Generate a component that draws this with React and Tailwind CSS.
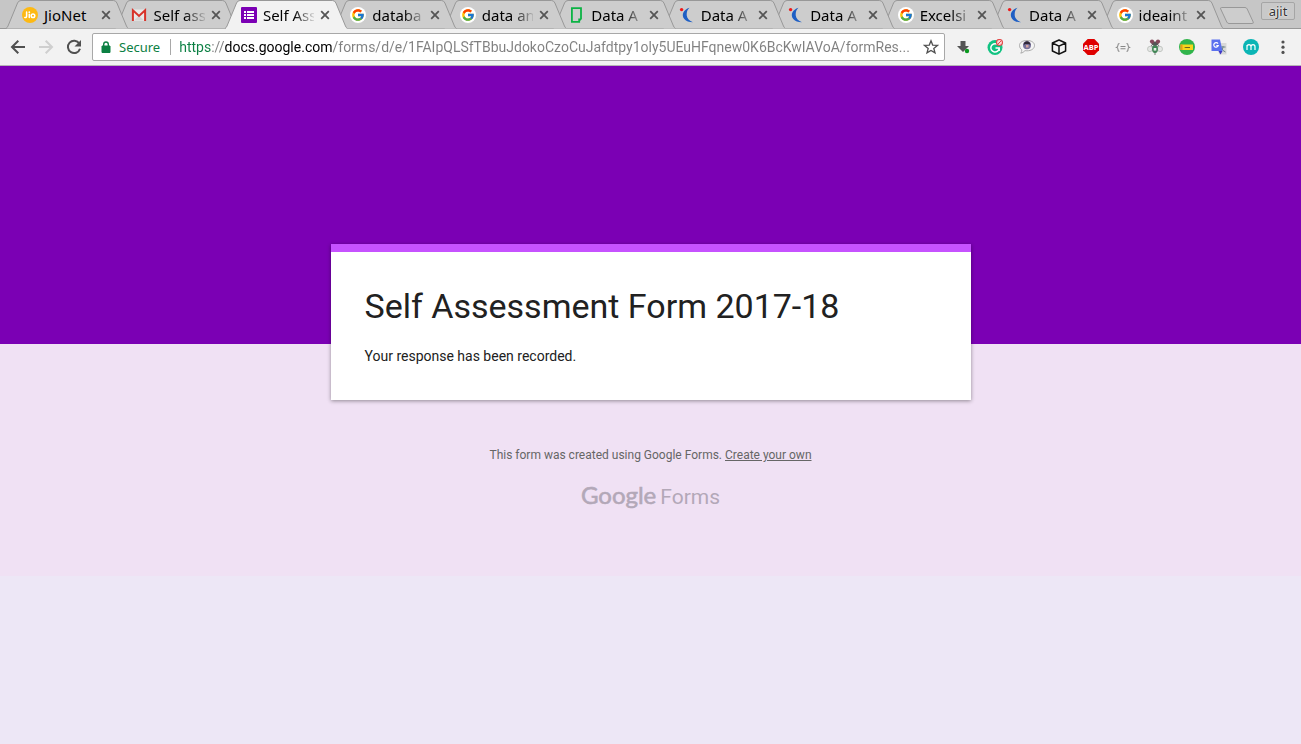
import React from "react";
import { FcGoogle } from "react-icons/fc";

function JioIcon() {
  return (
    <svg viewBox="0 0 16 16" className="size-4">
      <circle cx="8" cy="8" r="8" fill="#fdb913" />
      <g fill="none" stroke="#fff" strokeWidth="1.5" strokeLinecap="round">
        <path d="M4.6 5v4.200q0 1.600-1.800 1.200M7.300 7.300v3.200" />
        <circle cx="11" cy="8.800" r="1.800" />
      </g>
      <circle cx="7.300" cy="5.200" r=".9" fill="#fff" />
    </svg>
  );
}

function GmailIcon() {
  return (
    <svg viewBox="0 0 16 16" className="size-4">
      <rect x="1" y="2.500" width="14" height="11.500" fill="#e9e9e9" />
      <path d="M3 13.500 8 8.500l5 5z" fill="#d4d4d4" />
      <path d="M1.900 14V3.200L8 8.900l6.100-5.700V14" fill="none" stroke="#d8332a" strokeWidth="2" />
    </svg>
  );
}

function FormsIcon() {
  return (
    <svg viewBox="0 0 16 16" className="size-4">
      <rect width="16" height="16" rx="1" fill="#7b00b4" />
      <path d="M3 4h2v2H3zM3 7h2v2H3zM3 10h2v2H3zM6 4h7v2H6zM6 7h7v2H6zM6 10h7v2H6z" fill="#fff" />
    </svg>
  );
}

function GoogleIcon() {
  return (
    <span className="flex size-4 items-center justify-center rounded-full bg-white">
      <FcGoogle className="size-[14px]" />
    </span>
  );
}

function GlassdoorIcon() {
  return (
    <svg viewBox="0 0 16 16" className="size-4" fill="none" stroke="#0cb344" strokeWidth="1.800">
      <path d="M4.800 1.200h7.200v11.300M2.900 4v10.800h7.300v-2.300H12M2.900 4.200V1.200H5" />
    </svg>
  );
}

function CrescentIcon() {
  return (
    <svg viewBox="0 0 16 16" className="size-4">
      <path d="M10.500 .8C4.500 2.500 2 8 5.300 12c2 2.300 4.600 3.300 8.700 3.300-3.600-1.500-6-3.600-6.300-7C7.500 5 8.500 2.400 10.500 .8z" fill="#1f5fc4" />
      <circle cx="2.600" cy="2.600" r="1.700" fill="#f01818" />
    </svg>
  );
}

const tabs = [
  { title: "JioNet", Icon: JioIcon, whole: true },
  { title: "Self ass", Icon: GmailIcon },
  { title: "Self Ass", Icon: FormsIcon, active: true },
  { title: "databa", Icon: GoogleIcon },
  { title: "data an", Icon: GoogleIcon },
  { title: "Data A", Icon: GlassdoorIcon },
  { title: "Data A", Icon: CrescentIcon },
  { title: "Data A", Icon: CrescentIcon },
  { title: "Excelsi", Icon: GoogleIcon },
  { title: "Data A", Icon: CrescentIcon },
  { title: "ideaint", Icon: GoogleIcon },
];

function Tab({ title, Icon, active, whole, order }) {
  return (
    <li className="relative flex min-w-0 flex-1" style={{ zIndex: order }}>
      <svg
        viewBox="0 0 122 29"
        preserveAspectRatio="none"
        className="absolute top-0 left-0 h-[29px] w-[calc(100%+13px)]"
      >
        <path
          d="M0 28.500C1 28 1.500 27 2 26L11.500 3Q12.500.5 15 .5H107Q109.500.5 110.500 3L120 26C120.500 27 121 28 122 28.500"
          fill={active ? "#f2f2f2" : "#cdcdcd"}
          stroke="#989898"
          vectorEffect="non-scaling-stroke"
        />
        {active && <path d="M1 28.500H121" stroke="#f2f2f2" />}
      </svg>
      <div className="relative flex min-w-0 flex-1 items-center gap-[6px] pt-px pr-1 pl-4">
        <span className="shrink-0">
          <Icon />
        </span>
        <a
          href="#"
          className={
            whole
              ? "min-w-0 flex-1 text-[15px] leading-5 whitespace-nowrap text-black"
              : "min-w-0 flex-1 mask-r-from-[60%] mask-r-to-[105%] text-[15px] leading-5 whitespace-nowrap text-black"
          }
        >
          {title}
        </a>
        <button aria-label={`Close ${title}`} className="shrink-0">
          <svg viewBox="0 0 10 10" className="size-[10px]" stroke="#555" strokeWidth="1.800">
            <path d="M1.200 1.200 8.800 8.800M8.800 1.200 1.200 8.800" />
          </svg>
        </button>
      </div>
    </li>
  );
}

const extensions = [
  {
    name: "Downloads",
    art: (
      <>
        <path d="M5.500 2h5v5H14L8 13 2 7h3.500z" fill="#555" />
        <circle cx="12" cy="12" r="2.200" fill="#0a9a20" />
      </>
    ),
  },
  {
    name: "Grammar check",
    art: (
      <>
        <circle cx="8" cy="8.500" r="7.500" fill="#12c382" />
        <path d="M10 5.200A4.200 4.200 0 1 0 12.200 9H8.500m3.700 0v3" fill="none" stroke="#fff" strokeWidth="1.500" />
        <circle cx="12.500" cy="3.500" r="3" fill="#fbd5d5" stroke="#e34848" strokeWidth="1.100" />
        <path d="m10.500 5.500 4-4" stroke="#e34848" />
      </>
    ),
  },
  {
    name: "Chat",
    art: (
      <>
        <path d="M8 1.500c4.500 0 7.500 2 7.500 5s-3 5.300-7.500 5.300q-1 0-2-.2Q4 14 1.800 14.200q1.200-1.600 1-3.400Q.5 9.400.5 6.500c0-3 3-5 7.500-5z" fill="#f5f5f5" stroke="#9a9a9a" strokeWidth=".8" />
        <circle cx="8" cy="6.200" r="4" fill="#76709a" />
        <path d="M4.500 6Q5 2.200 8 2.200T11.500 6L9.500 5h-3z" fill="#302838" />
        <path d="M7 6h2.500v2.500H7z" fill="#d6a5a0" />
      </>
    ),
  },
  {
    name: "Cube",
    art: (
      <path d="m8 1 6.600 3v8L8 15.200 1.400 12V4zM1.400 4 8 7.200 14.600 4M8 7.200v8" fill="none" stroke="#111" strokeWidth="1.500" strokeLinejoin="round" />
    ),
  },
  {
    name: "Ad blocker",
    art: (
      <>
        <path d="M4.700 0h6.600L16 4.700v6.600L11.300 16H4.700L0 11.300V4.700z" fill="#df0000" />
        <text x="8" y="10.900" textAnchor="middle" fontFamily="Open Sans, Liberation Sans" fontWeight="700" fontSize="7.500" fill="#fff">ABP</text>
      </>
    ),
  },
  {
    name: "JSON formatter",
    art: (
      <path d="M4.500 4.500Q3 4.500 3 6t-1.300 2.500Q3 8.500 3 10.500t1.500 1.800M11.500 4.500Q13 4.500 13 6t1.300 2.500Q13 8.500 13 10.500t-1.500 1.800M5.500 7.500h5M5.500 9.700h5" fill="none" stroke="#888" strokeWidth="1.100" />
    ),
  },
  {
    name: "Debugger",
    art: (
      <>
        <ellipse cx="3" cy="10" rx="2.500" ry="2.700" fill="#e4e6e4" stroke="#b5b9b5" strokeWidth=".7" />
        <ellipse cx="13" cy="10" rx="2.500" ry="2.700" fill="#e4e6e4" stroke="#b5b9b5" strokeWidth=".7" />
        <path d="M8 13v3M4 6l1.500 2M12 6l-1.500 2" stroke="#777" />
        <ellipse cx="8" cy="10" rx="3" ry="4" fill="#408555" />
        <path d="M6.700 9h2.600v2.600H6.700z" fill="#e6efe6" />
        <ellipse cx="8" cy="4.600" rx="3.500" ry="2" fill="#555" />
        <circle cx="5" cy="2.600" r="2.100" fill="#84485a" />
        <circle cx="11" cy="2.600" r="2.100" fill="#84485a" />
      </>
    ),
  },
  {
    name: "Notes",
    art: (
      <>
        <circle cx="8" cy="8" r="8" fill="#31b44b" />
        <path d="M1.500 5.500H14v5.500H1.500z" fill="#f7d51c" />
        <path d="M1.500 5.500h2V11h-2z" fill="#e59b1c" />
        <path d="m5 9 1.500-1H11v1z" fill="#6b6420" />
      </>
    ),
  },
  {
    name: "Translate",
    art: (
      <>
        <path d="M6 4h9.500v11.500H8z" fill="#d9d9d9" />
        <path d="M9.500 8h5M12 7v1q0 3-3 5M10.500 9q1 3 4 4" fill="none" stroke="#6e8588" />
        <path d="M.5.5h8.500L11.500 12H.5z" fill="#5b71ee" />
        <path d="M7.500 12h4L9.500 15.500z" fill="#3f36c4" />
        <path d="M7 4.600A2.300 2.300 0 1 0 7.300 6.600H5.300" fill="none" stroke="#fff" strokeWidth="1.200" />
      </>
    ),
  },
  {
    name: "Momentum",
    art: (
      <>
        <circle cx="8" cy="8" r="8" fill="#0bb5b5" />
        <path d="M4 11V6M4 7.800Q4 5.700 6 5.700T8 7.800V11M8 7.800q0-2.100 2-2.100t2 2.100V11" fill="none" stroke="#fff" strokeWidth="1.200" />
      </>
    ),
  },
];

function TabStrip() {
  return (
    <nav className="flex h-[29px] border-b border-[#989898] bg-[#c6c6c6] pr-[6px] pl-[6px]">
      <ul className="isolate flex h-[29px] min-w-0 flex-1">
        {tabs.map((tab, i) => (
          <Tab key={i} {...tab} order={tab.active ? 30 : tabs.length - i} />
        ))}
      </ul>
      <button aria-label="New tab" className="ml-[10px] flex shrink-0 items-center pt-[2px]">
        <svg viewBox="0 0 34 17" className="h-[17px] w-[34px]">
          <path d="M1.500.5H25q1.500 0 2.200 1.500l6 13q.5 1.500-1 1.500H9q-1.500 0-2.200-1.500L.7 2Q.2.5 1.500.5z" fill="#cdcdcd" stroke="#989898" />
        </svg>
      </button>
      <button className="mt-[2px] ml-[7px] h-[18px] w-[34px] shrink-0 rounded-xs border border-[#a5a5a5] bg-[#c9c9c9] text-[13px] leading-4 text-[#333] text-shadow-[0_0_2px_white,0_0_1px_white]">
        ajit
      </button>
    </nav>
  );
}

function Toolbar() {
  return (
    <div className="flex h-[37px] items-center border-b border-[#b6b4b6] bg-[#f2f2f2] pr-[2px] pl-1">
      <button aria-label="Back" className="flex w-7 shrink-0 justify-center">
        <svg viewBox="0 0 16 16" className="size-4" fill="none" stroke="#505050" strokeWidth="2">
          <path d="M15 8H2.500M8.300 1.700 2 8l6.300 6.300" />
        </svg>
      </button>
      <button aria-label="Forward" className="flex w-7 shrink-0 justify-center">
        <svg viewBox="0 0 16 16" className="size-4" fill="none" stroke="#cfcfcf" strokeWidth="2">
          <path d="M1 8h12.500M7.700 1.700 14 8l-6.300 6.300" />
        </svg>
      </button>
      <button aria-label="Reload" className="flex w-7 shrink-0 justify-center">
        <svg viewBox="0 0 16 16" className="size-4" fill="none" stroke="#505050" strokeWidth="2">
          <path d="M13.300 4.500A6.200 6.200 0 1 0 14 9.800" />
          <path d="M15 1v6.500H8.500z" fill="#505050" stroke="none" />
        </svg>
      </button>
      <form className="mr-[2px] ml-1 flex h-7 min-w-0 flex-1 items-center rounded-xs border border-[#a8a8a8] bg-white pr-[5px] pl-2">
        <svg viewBox="0 0 10 12" className="h-3 w-[10px] shrink-0">
          <path d="M1 5h8v6.500H1z" fill="#0b8043" stroke="#0b8043" strokeLinejoin="round" />
          <path d="M2.700 5V3.300a2.300 2.300 0 0 1 4.600 0V5" fill="none" stroke="#0b8043" strokeWidth="1.400" />
        </svg>
        <label htmlFor="address" className="ml-2 text-[13px] leading-5 text-[#0b8043]">
          Secure
        </label>
        <span className="mr-2 ml-[10px] h-4 w-px shrink-0 bg-[#a8a8a8]" />
        <input
          id="address"
          readOnly
          value="https://docs.google.com/forms/d/e/1FAIpQLSfTBbuJdokoCzoCuJafdtpy1oly5UEuHFqnew0K6BcKwIAVoA/formRes..."
          className="h-5 min-w-0 flex-1 bg-[linear-gradient(to_right,#0b8043_32px,#808080_32px,#808080_46px,#000_46px,#000_153px,#808080_153px)] bg-clip-text font-[Roboto,sans-serif] text-[14px] leading-5 text-ellipsis text-transparent outline-none"
        />
        <button type="button" aria-label="Bookmark" className="ml-1 shrink-0">
          <svg viewBox="0 0 16 16" className="size-4" fill="none" stroke="#505050" strokeWidth="1.300">
            <path d="m8 1.800 1.700 4.300 4.700.3-3.600 3 1.200 4.500L8 11.400l-4 2.500 1.200-4.500-3.600-3 4.700-.3z" />
          </svg>
        </button>
      </form>
      {extensions.map(({ name, art }) => (
        <button key={name} aria-label={name} className="flex w-8 shrink-0 justify-center">
          <svg viewBox="0 0 16 16" className="size-4">{art}</svg>
        </button>
      ))}
      <button aria-label="Menu" className="flex w-8 shrink-0 justify-center">
        <svg viewBox="0 0 16 16" className="size-4" fill="#505050">
          <circle cx="8" cy="3" r="1.600" />
          <circle cx="8" cy="8.200" r="1.600" />
          <circle cx="8" cy="13.400" r="1.600" />
        </svg>
      </button>
    </div>
  );
}

export default function App() {
  return (
    <div className="min-h-screen bg-[#ede7f6] font-[Roboto,sans-serif]">
      <header className="font-['Noto_Sans',sans-serif]">
        <TabStrip />
        <Toolbar />
      </header>
      <div className="h-[278px] bg-[#7b00b4]" />
      <main className="flex flex-col items-center bg-[#f0e1f4] pb-[65px]">
        <section className="-mt-[100px] w-full max-w-[640px] border-t-8 border-[#c652ff] bg-white px-[34px] pt-8 pb-[34px] shadow-[0_1px_4px_rgba(0,0,0,0.4)]">
          <h1 className="text-[34px] leading-[44px] text-[#212121]">Self Assessment Form 2017-18</h1>
          <p className="mt-[18px] text-[14px] leading-5 text-[#212121]">Your response has been recorded.</p>
        </section>
        <footer className="flex flex-col items-center pt-[47px] text-center">
          <p className="text-[12px] leading-4 text-[#666]">
            This form was created using Google Forms.{" "}
            <a href="#" className="underline">Create your own</a>
          </p>
          <a href="#" className="mt-[18px] flex items-baseline gap-1 text-[21px] leading-7 text-[#b3a8b8]">
            <span className="font-[Lato,sans-serif] text-[24px] [-webkit-text-stroke:0.6px_#b3a8b8]">Google</span>
            <span>Forms</span>
          </a>
        </footer>
      </main>
    </div>
  );
}
